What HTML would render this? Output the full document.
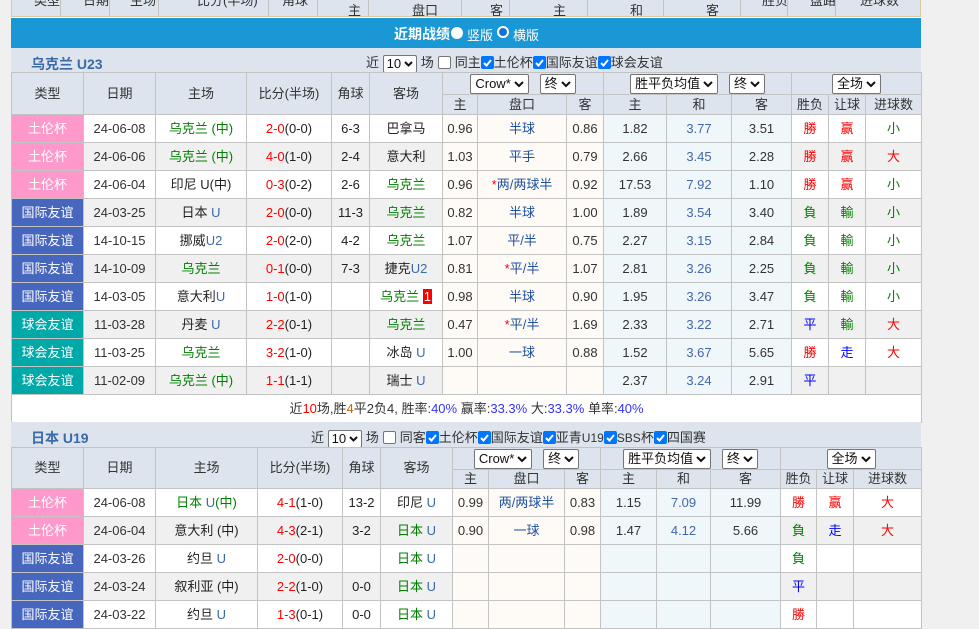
<!DOCTYPE html>
<html><head><meta charset="utf-8">
<style>
*{box-sizing:border-box;margin:0;padding:0}
body{width:979px;height:615px;overflow:hidden;background:#f0f0f0;font-family:"Liberation Sans","Noto Sans CJK SC",sans-serif;font-size:13px;color:#222;position:relative}
.abs{position:absolute}
table{border-collapse:collapse;table-layout:fixed;position:absolute;left:11px;width:910px}
td{border:1px solid #c3c3c3;text-align:center;vertical-align:middle;white-space:nowrap;overflow:hidden;padding:0;line-height:14px}
.h td{background:#dde4ee;color:#333}
.pk{background:#ff99cc!important;color:#fff}
.bl{background:#4766be!important;color:#fff}
.tl{background:#00a8a8!important;color:#fff}
tr.r td{background:#fff;height:28px}
tr.r.g td{background:#f0f0f0}
tr.r td.o{background:#fefaf6;color:#333}
tr.r td.p{background:#f0f7fb;color:#333}
tr.r td.pb{background:#f0f7fb;color:#4466aa}
.hc{color:#1e50a2!important}
.gr{color:#008000}.rd{color:#f00}.bu{color:#00f}
.dt{color:#333}
.u{color:#3a6aa8}
.sel{display:inline-block;height:20px;border:1px solid #767676;border-radius:2px;background:#fff;padding:0 4px;line-height:18px;font-size:13px;color:#111;vertical-align:middle}
.sel svg{vertical-align:middle;margin-left:3px}
.cb{display:inline-block;width:13px;height:13px;border-radius:2px;vertical-align:-2px;background:#0075ff;position:relative}
.cbe{display:inline-block;width:13px;height:13px;border-radius:2px;vertical-align:-2px;border:1px solid #767676;background:#fff;margin:0 4px}
.sec{position:absolute;left:11px;width:910px;background:#dde4ee}
.ttl{position:absolute;left:20px;font-weight:bold;color:#3a6aa8;font-size:14px}
</style></head><body>
<div class="abs" style="left:11px;top:0;width:910px;height:617px;background:#fff"></div>

<div class="abs" style="left:11px;top:-1px;width:910px;height:18px;background:#dde4ee;border:1px solid #d8c9a0;border-top:none;overflow:hidden;color:#333">
<div class="abs" style="left:22px;top:-9px">类型</div>
<div class="abs" style="left:71px;top:-9px">日期</div>
<div class="abs" style="left:118px;top:-9px">主场</div>
<div class="abs" style="left:185px;top:-9px">比分(半场)</div>
<div class="abs" style="left:270px;top:-9px">角球</div>
<div class="abs" style="left:336px;top:1px">主</div>
<div class="abs" style="left:400px;top:1px">盘口</div>
<div class="abs" style="left:478px;top:1px">客</div>
<div class="abs" style="left:541px;top:1px">主</div>
<div class="abs" style="left:618px;top:1px">和</div>
<div class="abs" style="left:694px;top:1px">客</div>
<div class="abs" style="left:750px;top:-9px">胜负</div>
<div class="abs" style="left:798px;top:-9px">盘路</div>
<div class="abs" style="left:848px;top:-9px">进球数</div>
<div class="abs" style="left:305px;top:0;width:1px;height:18px;background:#c3c3c3"></div>
<div class="abs" style="left:356px;top:0;width:1px;height:18px;background:#c3c3c3"></div>
<div class="abs" style="left:449px;top:0;width:1px;height:18px;background:#c3c3c3"></div>
<div class="abs" style="left:497px;top:0;width:1px;height:18px;background:#c3c3c3"></div>
<div class="abs" style="left:575px;top:0;width:1px;height:18px;background:#c3c3c3"></div>
<div class="abs" style="left:651px;top:0;width:1px;height:18px;background:#c3c3c3"></div>
<div class="abs" style="left:728px;top:0;width:1px;height:18px;background:#c3c3c3"></div>
<div class="abs" style="left:48px;top:0;width:1px;height:18px;background:#c3c3c3"></div>
<div class="abs" style="left:97px;top:0;width:1px;height:18px;background:#c3c3c3"></div>
<div class="abs" style="left:146px;top:0;width:1px;height:18px;background:#c3c3c3"></div>
<div class="abs" style="left:256px;top:0;width:1px;height:18px;background:#c3c3c3"></div>
<div class="abs" style="left:775px;top:0;width:1px;height:18px;background:#c3c3c3"></div>
<div class="abs" style="left:823px;top:0;width:1px;height:18px;background:#c3c3c3"></div>
</div>

<div class="abs" style="left:11px;top:18px;width:910px;height:30px;background:#1a97d5;color:#fff">
<div class="abs" style="left:383px;top:6px;font-size:14px;font-weight:bold">近期战绩</div>
<div class="abs" style="left:440px;top:9px;width:12px;height:12px;border-radius:50%;background:#fff"></div>
<div class="abs" style="left:456px;top:7px">竖版</div>
<div class="abs" style="left:486px;top:8px;width:12px;height:12px;border-radius:50%;border:2px solid #fff;background:#1a6fd8"></div>
<div class="abs" style="left:502px;top:7px">横版</div>
</div>

<div class="sec" style="top:48px;height:24px">
<div class="ttl" style="top:6px">乌克兰 U23</div>
<div class="abs" style="left:355px;top:4px;color:#333">近 <span class="sel" style="height:18px;line-height:16px;padding:0 3px">10<svg width="9" height="6"><path d="M1 1l3.5 3.5L8 1" stroke="#111" stroke-width="2" fill="none"/></svg></span> 场<span class="cbe"></span>同主<span class="cb"><svg width="13" height="13" style="position:absolute;left:0;top:0"><path d="M3 7l2.5 2.5L10 4" stroke="#fff" stroke-width="2" fill="none"/></svg></span>土伦杯<span class="cb"><svg width="13" height="13" style="position:absolute;left:0;top:0"><path d="M3 7l2.5 2.5L10 4" stroke="#fff" stroke-width="2" fill="none"/></svg></span>国际友谊<span class="cb"><svg width="13" height="13" style="position:absolute;left:0;top:0"><path d="M3 7l2.5 2.5L10 4" stroke="#fff" stroke-width="2" fill="none"/></svg></span>球会友谊</div>
</div>

<table style="top:72px">
<colgroup><col style="width:72px"><col style="width:72px"><col style="width:91px"><col style="width:85px"><col style="width:38px"><col style="width:73px"><col style="width:35px"><col style="width:89px"><col style="width:37px"><col style="width:63px"><col style="width:65px"><col style="width:60px"><col style="width:37px"><col style="width:37px"><col style="width:56px"></colgroup>
<tr class="h" style="height:22px"><td rowspan="2">类型</td><td rowspan="2">日期</td><td rowspan="2">主场</td><td rowspan="2">比分(半场)</td><td rowspan="2">角球</td><td rowspan="2">客场</td>
<td colspan="3"><span class="sel">Crow*<svg width="10" height="7"><path d="M1 1l4 4 4-4" stroke="#111" stroke-width="2" fill="none"/></svg></span>&nbsp;&nbsp;&nbsp;<span class="sel">终<svg width="10" height="7"><path d="M1 1l4 4 4-4" stroke="#111" stroke-width="2" fill="none"/></svg></span></td>
<td colspan="3"><span class="sel">胜平负均值<svg width="10" height="7"><path d="M1 1l4 4 4-4" stroke="#111" stroke-width="2" fill="none"/></svg></span>&nbsp;&nbsp;&nbsp;<span class="sel">终<svg width="10" height="7"><path d="M1 1l4 4 4-4" stroke="#111" stroke-width="2" fill="none"/></svg></span></td>
<td colspan="3"><span class="sel">全场<svg width="10" height="7"><path d="M1 1l4 4 4-4" stroke="#111" stroke-width="2" fill="none"/></svg></span></td></tr>
<tr class="h" style="height:20px"><td>主</td><td>盘口</td><td>客</td><td>主</td><td>和</td><td>客</td><td>胜负</td><td>让球</td><td>进球数</td></tr>

<tr class="r"><td class="pk">土伦杯</td><td class="dt">24-06-08</td><td class="gr">乌克兰 (中)</td><td><span class="rd">2-0</span>(0-0)</td><td>6-3</td><td>巴拿马</td><td class="o">0.96</td><td class="o hc">半球</td><td class="o">0.86</td><td class="p">1.82</td><td class="pb">3.77</td><td class="p">3.51</td><td class="rd">勝</td><td class="rd">赢</td><td class="gr">小</td></tr>
<tr class="r g"><td class="pk">土伦杯</td><td class="dt">24-06-06</td><td class="gr">乌克兰 (中)</td><td><span class="rd">4-0</span>(1-0)</td><td>2-4</td><td>意大利</td><td class="o">1.03</td><td class="o hc">平手</td><td class="o">0.79</td><td class="p">2.66</td><td class="pb">3.45</td><td class="p">2.28</td><td class="rd">勝</td><td class="rd">赢</td><td class="rd">大</td></tr>
<tr class="r"><td class="pk">土伦杯</td><td class="dt">24-06-04</td><td>印尼 U(中)</td><td><span class="rd">0-3</span>(0-2)</td><td>2-6</td><td class="gr">乌克兰</td><td class="o">0.96</td><td class="o hc"><span class="rd">*</span>两/两球半</td><td class="o">0.92</td><td class="p">17.53</td><td class="pb">7.92</td><td class="p">1.10</td><td class="rd">勝</td><td class="rd">赢</td><td class="gr">小</td></tr>
<tr class="r g"><td class="bl">国际友谊</td><td class="dt">24-03-25</td><td>日本 <span class="u">U</span></td><td><span class="rd">2-0</span>(0-0)</td><td>11-3</td><td class="gr">乌克兰</td><td class="o">0.82</td><td class="o hc">半球</td><td class="o">1.00</td><td class="p">1.89</td><td class="pb">3.54</td><td class="p">3.40</td><td class="gr">負</td><td class="gr">輸</td><td class="gr">小</td></tr>
<tr class="r"><td class="bl">国际友谊</td><td class="dt">14-10-15</td><td>挪威<span class="u">U2</span></td><td><span class="rd">2-0</span>(2-0)</td><td>4-2</td><td class="gr">乌克兰</td><td class="o">1.07</td><td class="o hc">平/半</td><td class="o">0.75</td><td class="p">2.27</td><td class="pb">3.15</td><td class="p">2.84</td><td class="gr">負</td><td class="gr">輸</td><td class="gr">小</td></tr>
<tr class="r g"><td class="bl">国际友谊</td><td class="dt">14-10-09</td><td class="gr">乌克兰</td><td><span class="rd">0-1</span>(0-0)</td><td>7-3</td><td>捷克<span class="u">U2</span></td><td class="o">0.81</td><td class="o hc"><span class="rd">*</span>平/半</td><td class="o">1.07</td><td class="p">2.81</td><td class="pb">3.26</td><td class="p">2.25</td><td class="gr">負</td><td class="gr">輸</td><td class="gr">小</td></tr>
<tr class="r"><td class="bl">国际友谊</td><td class="dt">14-03-05</td><td>意大利<span class="u">U</span></td><td><span class="rd">1-0</span>(1-0)</td><td></td><td class="gr">乌克兰 <span style="background:#f00;color:#fff;padding:0 1px">1</span></td><td class="o">0.98</td><td class="o hc">半球</td><td class="o">0.90</td><td class="p">1.95</td><td class="pb">3.26</td><td class="p">3.47</td><td class="gr">負</td><td class="gr">輸</td><td class="gr">小</td></tr>
<tr class="r g"><td class="tl">球会友谊</td><td class="dt">11-03-28</td><td>丹麦 <span class="u">U</span></td><td><span class="rd">2-2</span>(0-1)</td><td></td><td class="gr">乌克兰</td><td class="o">0.47</td><td class="o hc"><span class="rd">*</span>平/半</td><td class="o">1.69</td><td class="p">2.33</td><td class="pb">3.22</td><td class="p">2.71</td><td class="bu">平</td><td class="gr">輸</td><td class="rd">大</td></tr>
<tr class="r"><td class="tl">球会友谊</td><td class="dt">11-03-25</td><td class="gr">乌克兰</td><td><span class="rd">3-2</span>(1-0)</td><td></td><td>冰岛 <span class="u">U</span></td><td class="o">1.00</td><td class="o hc">一球</td><td class="o">0.88</td><td class="p">1.52</td><td class="pb">3.67</td><td class="p">5.65</td><td class="rd">勝</td><td class="bu">走</td><td class="rd">大</td></tr>
<tr class="r g"><td class="tl">球会友谊</td><td class="dt">11-02-09</td><td class="gr">乌克兰 (中)</td><td><span class="rd">1-1</span>(1-1)</td><td></td><td>瑞士 <span class="u">U</span></td><td class="o"></td><td class="o"></td><td class="o"></td><td class="p">2.37</td><td class="pb">3.24</td><td class="p">2.91</td><td class="bu">平</td><td></td><td></td></tr>
<tr style="height:28px"><td colspan="15" style="background:#fff;color:#333">近<span class="rd">10</span>场,胜<span style="color:#c60">4</span>平2负4, 胜率:<span style="color:#33f">40%</span> 赢率:<span style="color:#33f">33.3%</span> 大:<span style="color:#33f">33.3%</span> 单率:<span style="color:#33f">40%</span></td></tr>
</table>

<div class="sec" style="top:422px;height:26px">
<div class="ttl" style="top:6px">日本 U19</div>
<div class="abs" style="left:300px;top:5px;color:#333">近 <span class="sel" style="height:18px;line-height:16px;padding:0 3px">10<svg width="9" height="6"><path d="M1 1l3.5 3.5L8 1" stroke="#111" stroke-width="2" fill="none"/></svg></span> 场<span class="cbe"></span>同客<span class="cb"><svg width="13" height="13" style="position:absolute;left:0;top:0"><path d="M3 7l2.5 2.5L10 4" stroke="#fff" stroke-width="2" fill="none"/></svg></span>土伦杯<span class="cb"><svg width="13" height="13" style="position:absolute;left:0;top:0"><path d="M3 7l2.5 2.5L10 4" stroke="#fff" stroke-width="2" fill="none"/></svg></span>国际友谊<span class="cb"><svg width="13" height="13" style="position:absolute;left:0;top:0"><path d="M3 7l2.5 2.5L10 4" stroke="#fff" stroke-width="2" fill="none"/></svg></span>亚青<span style="font-size:12px">U19</span><span class="cb"><svg width="13" height="13" style="position:absolute;left:0;top:0"><path d="M3 7l2.5 2.5L10 4" stroke="#fff" stroke-width="2" fill="none"/></svg></span><span style="font-size:12px">SBS</span>杯<span class="cb"><svg width="13" height="13" style="position:absolute;left:0;top:0"><path d="M3 7l2.5 2.5L10 4" stroke="#fff" stroke-width="2" fill="none"/></svg></span>四国赛</div>
</div>

<table style="top:447px">
<colgroup><col style="width:72px"><col style="width:72px"><col style="width:102px"><col style="width:85px"><col style="width:38px"><col style="width:72px"><col style="width:36px"><col style="width:76px"><col style="width:36px"><col style="width:56px"><col style="width:54px"><col style="width:70px"><col style="width:36px"><col style="width:37px"><col style="width:68px"></colgroup>
<tr class="h" style="height:22px"><td rowspan="2">类型</td><td rowspan="2">日期</td><td rowspan="2">主场</td><td rowspan="2">比分(半场)</td><td rowspan="2">角球</td><td rowspan="2">客场</td>
<td colspan="3"><span class="sel">Crow*<svg width="10" height="7"><path d="M1 1l4 4 4-4" stroke="#111" stroke-width="2" fill="none"/></svg></span>&nbsp;&nbsp;&nbsp;<span class="sel">终<svg width="10" height="7"><path d="M1 1l4 4 4-4" stroke="#111" stroke-width="2" fill="none"/></svg></span></td>
<td colspan="3"><span class="sel">胜平负均值<svg width="10" height="7"><path d="M1 1l4 4 4-4" stroke="#111" stroke-width="2" fill="none"/></svg></span>&nbsp;&nbsp;&nbsp;<span class="sel">终<svg width="10" height="7"><path d="M1 1l4 4 4-4" stroke="#111" stroke-width="2" fill="none"/></svg></span></td>
<td colspan="3"><span class="sel">全场<svg width="10" height="7"><path d="M1 1l4 4 4-4" stroke="#111" stroke-width="2" fill="none"/></svg></span></td></tr>
<tr class="h" style="height:19px"><td>主</td><td>盘口</td><td>客</td><td>主</td><td>和</td><td>客</td><td>胜负</td><td>让球</td><td>进球数</td></tr>
<tr class="r"><td class="pk">土伦杯</td><td class="dt">24-06-08</td><td class="gr">日本 <span class="u">U</span>(中)</td><td><span class="rd">4-1</span>(1-0)</td><td>13-2</td><td>印尼 <span class="u">U</span></td><td class="o">0.99</td><td class="o hc">两/两球半</td><td class="o">0.83</td><td class="p">1.15</td><td class="pb">7.09</td><td class="p">11.99</td><td class="rd">勝</td><td class="rd">赢</td><td class="rd">大</td></tr>
<tr class="r g"><td class="pk">土伦杯</td><td class="dt">24-06-04</td><td>意大利 (中)</td><td><span class="rd">4-3</span>(2-1)</td><td>3-2</td><td class="gr">日本 <span class="u">U</span></td><td class="o">0.90</td><td class="o hc">一球</td><td class="o">0.98</td><td class="p">1.47</td><td class="pb">4.12</td><td class="p">5.66</td><td class="gr">負</td><td class="bu">走</td><td class="rd">大</td></tr>
<tr class="r"><td class="bl">国际友谊</td><td class="dt">24-03-26</td><td>约旦 <span class="u">U</span></td><td><span class="rd">2-0</span>(0-0)</td><td></td><td class="gr">日本 <span class="u">U</span></td><td class="o"></td><td class="o"></td><td class="o"></td><td class="p"></td><td class="p"></td><td class="p"></td><td class="gr">負</td><td></td><td></td></tr>
<tr class="r g"><td class="bl">国际友谊</td><td class="dt">24-03-24</td><td>叙利亚 (中)</td><td><span class="rd">2-2</span>(1-0)</td><td>0-0</td><td class="gr">日本 <span class="u">U</span></td><td class="o"></td><td class="o"></td><td class="o"></td><td class="p"></td><td class="p"></td><td class="p"></td><td class="bu">平</td><td></td><td></td></tr>
<tr class="r"><td class="bl">国际友谊</td><td class="dt">24-03-22</td><td>约旦 <span class="u">U</span></td><td><span class="rd">1-3</span>(0-1)</td><td>0-0</td><td class="gr">日本 <span class="u">U</span></td><td class="o"></td><td class="o"></td><td class="o"></td><td class="p"></td><td class="p"></td><td class="p"></td><td class="rd">勝</td><td></td><td></td></tr>
</table>
</body></html>
